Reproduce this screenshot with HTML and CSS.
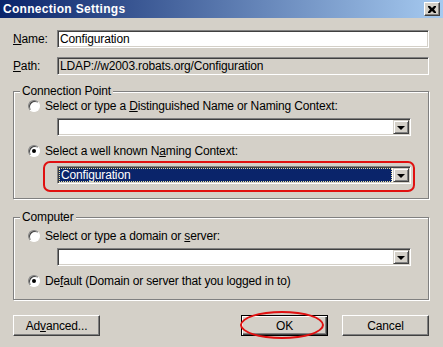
FILE: index.html
```html
<!DOCTYPE html>
<html lang="en">
<head>
  <meta charset="UTF-8">
  <title>Connection Settings</title>
  <link rel="stylesheet" href="styles.css">
</head>
<body>
  <div class="window">
    <div class="titlebar">
      <span class="title">Connection Settings</span>
      <span class="close-btn">
        <svg width="8" height="7" viewBox="0 0 8 7"><path d="M0 0h2l2 2 2-2h2v1L6 3.5 8 6v1H6L4 5 2 7H0V6l2-2.5L0 1z" fill="#000"/></svg>
      </span>
    </div>

    <div class="content">
      <div class="field-row">
        <label class="field-label"><u>N</u>ame:</label>
        <div class="textbox">Configuration</div>
      </div>
      <div class="field-row">
        <label class="field-label"><u>P</u>ath:</label>
        <div class="textbox readonly">LDAP://w2003.robats.org/Configuration</div>
      </div>

      <div class="group group-connection">
        <span class="group-title">Connection Point</span>
        <div class="radio-row">
          <span class="radio"></span>
          <span>Select or type a <u>D</u>istinguished Name or Naming Context:</span>
        </div>
        <div class="combo">
          <div class="combo-text"></div>
          <span class="combo-btn"><span class="arrow"></span></span>
        </div>
        <div class="radio-row second">
          <span class="radio checked"></span>
          <span>Select a well known N<u>a</u>ming Context:</span>
        </div>
        <div class="highlight">
          <div class="combo selected">
            <div class="combo-text"><span class="sel-text">Configuration</span></div>
            <span class="combo-btn"><span class="arrow"></span></span>
          </div>
        </div>
      </div>

      <div class="group group-computer">
        <span class="group-title">Computer</span>
        <div class="radio-row first">
          <span class="radio"></span>
          <span>Select or type a domain or <u>s</u>erver:</span>
        </div>
        <div class="combo">
          <div class="combo-text"></div>
          <span class="combo-btn"><span class="arrow"></span></span>
        </div>
        <div class="radio-row second">
          <span class="radio checked"></span>
          <span>De<u>f</u>ault (Domain or server that you logged in to)</span>
        </div>
      </div>

      <div class="buttons">
        <button type="button" class="btn">Ad<u>v</u>anced...</button>
        <button type="button" class="btn default">OK</button>
        <button type="button" class="btn">Cancel</button>
      </div>
    </div>
  </div>
</body>
</html>
```

FILE: styles.css
```css
body {
  margin: 0;
  background: #d4d0c8;
  font-family: "Liberation Sans", Arial, sans-serif;
  font-size: 12px;
  letter-spacing: -0.15px;
  color: #000;
}
.window {
  width: 443px;
  height: 347px;
  overflow: hidden;
}
.titlebar {
  height: 18px;
  display: flex;
  align-items: center;
  justify-content: space-between;
  padding: 0 3px;
  background: linear-gradient(to right, #0a246a, #a6caf0);
}
.title {
  color: #fff;
  font-weight: bold;
  font-size: 12px;
  letter-spacing: 0.3px;
}
.close-btn {
  width: 14px;
  height: 12px;
  display: flex;
  align-items: center;
  justify-content: center;
  background: #d4d0c8;
  border: 1px solid;
  border-color: #fff #404040 #404040 #fff;
  box-shadow: inset -1px -1px #808080;
}
.content {
  padding: 12px 14px 0 13px;
}
.field-row {
  display: flex;
  align-items: center;
  margin-bottom: 9px;
}
.field-label {
  width: 44px;
}
.textbox {
  width: 368px;
  height: 16px;
  line-height: 16px;
  padding-left: 2px;
  background: #fff;
  border: 1px solid;
  border-color: #808080 #fff #fff #808080;
  box-shadow: inset 1px 1px #404040, inset -1px -1px #d4d0c8;
}
.textbox.readonly {
  background: #d4d0c8;
}
.group {
  margin-top: 16px;
  border: 1px solid #808080;
  box-shadow: inset 1px 1px #fff, 1px 1px #fff;
  padding: 0 0 6px 14px;
  width: 400px;
}
.group-title {
  display: table;
  margin: -8px 0 0 -8px;
  padding: 0 2px;
  line-height: 14px;
  background: #d4d0c8;
}
.radio-row {
  display: flex;
  align-items: center;
  gap: 5px;
  height: 16px;
}
.radio-row.second {
  margin-top: 7px;
}
.group-computer {
  margin-top: 18px;
  padding-bottom: 10px;
}
.group-computer .radio-row.first {
  margin-top: 4px;
}
.radio {
  position: relative;
  width: 10px;
  height: 10px;
  border-radius: 50%;
  background: #fff;
  border: 1px solid;
  border-color: #808080 #fff #fff #808080;
  box-shadow: inset 1px 1px #404040;
}
.radio.checked::after {
  content: "";
  position: absolute;
  left: 3px;
  top: 3px;
  width: 4px;
  height: 4px;
  border-radius: 50%;
  background: #000;
}
.combo {
  display: flex;
  align-items: center;
  width: 350px;
  height: 14px;
  margin: 4px 0 0 29px;
  padding: 1px;
  background: #fff;
  border: 1px solid;
  border-color: #808080 #fff #fff #808080;
  box-shadow: inset 1px 1px #404040, inset -1px -1px #d4d0c8;
}
.combo-text {
  flex: 1;
  height: 14px;
  display: flex;
  align-items: center;
}
.combo-btn {
  width: 14px;
  height: 12px;
  display: flex;
  align-items: center;
  justify-content: center;
  background: #d4d0c8;
  border: 1px solid;
  border-color: #d4d0c8 #404040 #404040 #d4d0c8;
  box-shadow: inset 1px 1px #fff, inset -1px -1px #808080;
}
.arrow {
  width: 0;
  height: 0;
  border-left: 4px solid transparent;
  border-right: 4px solid transparent;
  border-top: 4px solid #000;
  margin-top: 1px;
}
.highlight {
  width: 356px;
  margin: 2px 0 0 15px;
  padding: 3px 0 6px 12px;
  border: 2px solid #e01010;
  border-radius: 7px;
}
.highlight .combo {
  margin: 0;
}
.combo.selected .combo-text {
  background: #0a246a;
  color: #fff;
  margin-right: 1px;
  outline: 1px dotted #e8e0a0;
  outline-offset: -1px;
  padding-left: 2px;
}
.buttons {
  display: flex;
  gap: 14px;
  margin-top: 15px;
}
.btn {
  width: 87px;
  height: 21px;
  padding: 0;
  font-family: inherit;
  font-size: 12px;
  letter-spacing: inherit;
  color: #000;
  background: #d4d0c8;
  border: 1px solid;
  border-color: #fff #404040 #404040 #fff;
  box-shadow: inset -1px -1px #808080;
}
.btn:first-child {
  margin-right: auto;
}
.btn.default {
  position: relative;
  border-color: #000;
  box-shadow: inset 1px 1px #fff, inset -1px -1px #404040, inset -2px -2px #808080;
}
.btn.default::after {
  content: "";
  position: absolute;
  left: -2px;
  top: -5px;
  width: 80px;
  height: 24px;
  border: 2px solid #e01010;
  border-radius: 50%;
}
```
